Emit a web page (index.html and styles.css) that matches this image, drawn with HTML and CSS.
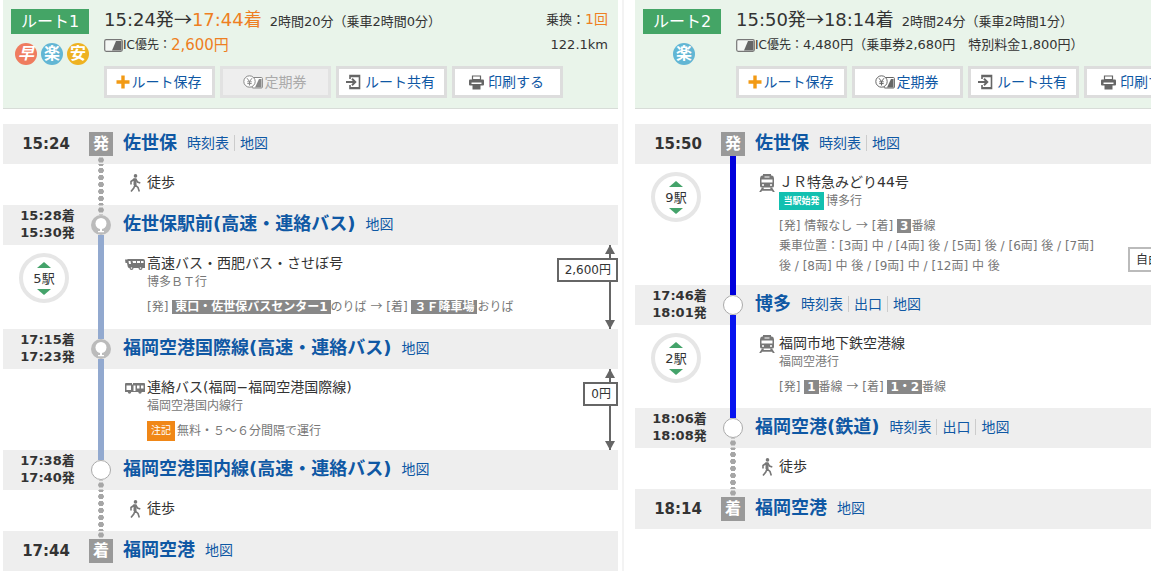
FILE: index.html
```html
<!DOCTYPE html>
<html lang="ja">
<head>
<meta charset="utf-8">
<meta name="viewport" content="width=device-width, initial-scale=1">
<title>佐世保 → 福岡空港 ルート検索結果</title>
<link rel="stylesheet" href="styles.css">
</head>
<body>
<svg class="defs" width="0" height="0" aria-hidden="true">
  <symbol id="i-ic" viewBox="0 0 19 13"><rect x=".7" y=".7" width="17.6" height="11.6" rx="1.5" fill="#f4f7f4" stroke="#777" stroke-width="1.2"/><path d="M8 11.5 12 2h5.500v9.500z" fill="#666"/></symbol>
  <symbol id="i-plus" viewBox="0 0 14 14"><path d="M5.300 .5h3.400v4.800h4.800v3.400H8.700v4.800H5.300V8.700H.5V5.300h4.800z" fill="#f29a14"/></symbol>
  <symbol id="i-pass" viewBox="0 0 20 15"><rect x="9" y="2.500" width="10.400" height="10.500" rx="1" fill="#fff" stroke="currentColor"/><path d="M12 12.500 16 4h2.500v8.500z" fill="currentColor"/><circle cx="6.500" cy="6.500" r="5.700" fill="#fff" stroke="currentColor"/><path d="M4 3.200 6.500 6.500 9 3.200M6.500 6.500v4M4.300 6.800h4.400M4.300 8.600h4.400" fill="none" stroke="currentColor"/></symbol>
  <symbol id="i-share" viewBox="0 0 15 16"><path d="M4 5V1.500h9.500v13H4V11" fill="none" stroke="#666" stroke-width="1.600"/><path d="M4 2.200h9.500M4 14h9.500" stroke="#666" stroke-width="2"/><path d="M0 8h8.500M6 4.800 9.300 8 6 11.200" fill="none" stroke="#666" stroke-width="1.900"/></symbol>
  <symbol id="i-print" viewBox="0 0 15 15"><path d="M3.500 1h8v3.500h-8z" fill="#fff" stroke="#666" stroke-width="1.200"/><rect x="0" y="4.500" width="15" height="6" rx="1" fill="#666"/><path d="M2.500 7.500h10V9h-10z" fill="#fff"/><path d="M3.500 9h8v5.500h-8z" fill="#666"/></symbol>
  <symbol id="i-walk" viewBox="0 0 12 18"><circle cx="6.500" cy="1.900" r="1.800" fill="#777"/><path d="M6 4.800v6L9 13.500l1.300 4M6 10.800 4.800 14 2 17.500M5.500 5 2 7.500V10.500M6.800 5.300 8.500 8l2.800 1" fill="none" stroke="#777" stroke-width="1.600"/><path d="M4.500 4.300h3v6.700h-3z" fill="#777"/></symbol>
  <symbol id="i-coach" viewBox="0 0 20 12"><path d="M0 1.500h2.500V1H18q2 0 2 2v7H4.500Q3 10 2.700 8.500L2 5H.5z" fill="#777"/><path d="M3.500 3h2l.5 3H4zM7.500 3H11v2H8zM12 3h3v2h-3zM16 3h2.500v2H16z" fill="#fff"/><circle cx="6.500" cy="10" r="2" fill="#777"/><circle cx="15.500" cy="10" r="2" fill="#777"/><circle cx="6.500" cy="10" r=".8" fill="#fff"/><circle cx="15.500" cy="10" r=".8" fill="#fff"/></symbol>
  <symbol id="i-shuttle" viewBox="0 0 20 12"><path d="M1 1h6v1.500h1V1h11q1 0 1 1v8H0V2q0-1 1-1z" fill="#777"/><path d="M1.500 3.500H6V8H1.500zM8.500 3.500h2V9h-2zM12 3.500h2.500V6.500H12zM16 3.500h2.500V6.500H16z" fill="#fff"/><circle cx="4.500" cy="10" r="1.700" fill="#777"/><circle cx="15" cy="10" r="1.700" fill="#777"/></symbol>
  <symbol id="i-train" viewBox="0 0 16 18"><path d="M4 0h8v1.500h1Q15 2 15 4.500V12q0 1.500-2 1.500H3Q1 13.500 1 12V4.500Q1 2 3 1.500h1z" fill="#777"/><path d="M2.500 5.500h11v3h-11zM5.500 2.500h5v1h-5z" fill="#fff"/><circle cx="4" cy="11" r="1" fill="#fff"/><circle cx="12" cy="11" r="1" fill="#fff"/><path d="M3 13.500h2L4.500 15h7L11 13.500h2l2.800 4.500h-2l-.8-1.300H3L2.200 18h-2z" fill="#777"/></symbol>
  <symbol id="i-stop" viewBox="0 0 20 20"><circle cx="10" cy="10" r="10" fill="#bbb"/><circle cx="10" cy="8.500" r="5.500" fill="#fff"/><path d="M9 13h2v3h2v1.300H7V16h2z" fill="#fff"/></symbol>
  <symbol id="i-up" viewBox="0 0 14 6"><path d="M7 0 14 6H0z" fill="#44a36a"/></symbol>
  <symbol id="i-down" viewBox="0 0 14 6"><path d="M0 0h14L7 6z" fill="#44a36a"/></symbol>
</svg>

<main class="page">
<article class="route">
  <header class="summary">
    <div class="labels">
      <h2 class="badge">ルート1</h2>
      <div class="merits"><span class="merit fast">早</span><span class="merit easy">楽</span><span class="merit cheap">安</span></div>
    </div>
    <div class="overview">
      <div class="line times"><div>15:24発<span class="cjk">→</span><span class="hot">17:44着</span><span class="duration">2時間20分（乗車2時間0分）</span></div><div class="meta">乗換：<span class="hot count">1回</span></div></div>
      <div class="line cost"><div class="price"><svg width="19" height="13"><use href="#i-ic"/></svg><span class="kind">IC優先：</span><span class="hot total">2,600円</span></div><div class="meta">122.1km</div></div>
      <div class="actions">
        <button type="button"><svg width="14" height="14"><use href="#i-plus"/></svg>ルート保存</button>
        <button type="button" disabled><svg class="pass" width="20" height="15"><use href="#i-pass"/></svg>定期券</button>
        <button type="button"><svg class="wide" width="15" height="16"><use href="#i-share"/></svg>ルート共有</button>
        <button type="button"><svg class="wide" width="15" height="15"><use href="#i-print"/></svg>印刷する</button>
      </div>
    </div>
  </header>
  <div class="timeline">
    <section class="row station">
      <div class="when single">15:24</div>
      <div class="rail"><i class="seg"></i><b class="mark">発</b><i class="seg walk"></i></div>
      <div class="place"><h3><a href="#">佐世保</a></h3><nav><a href="#">時刻表</a><a href="#">地図</a></nav></div>
    </section>
    <section class="row leg">
      <div class="when"></div><div class="rail"><i class="seg walk"></i></div>
      <div class="ride on-foot"><svg width="12" height="18"><use href="#i-walk"/></svg><div class="name">徒歩</div></div>
    </section>
    <section class="row station">
      <div class="when">15:28着<br>15:30発</div>
      <div class="rail"><i class="seg walk"></i><svg width="20" height="20"><use href="#i-stop"/></svg><i class="seg bus"></i></div>
      <div class="place"><h3><a href="#">佐世保駅前(高速・連絡バス)</a></h3><nav><a href="#">地図</a></nav></div>
    </section>
    <section class="row leg">
      <div class="when"><button type="button" class="stops"><svg width="14" height="6"><use href="#i-up"/></svg>5駅<svg width="14" height="6"><use href="#i-down"/></svg></button></div>
      <div class="rail"><i class="seg bus"></i></div>
      <div class="ride roomy"><svg class="bus-icon" width="20" height="12"><use href="#i-coach"/></svg>
        <div class="detail"><div class="name">高速バス・西肥バス・させぼ号</div><div class="bound">博多ＢＴ行</div>
        <div class="notes">[発] <b>東口・佐世保バスセンター1</b>のりば <span class="cjk">→</span> [着] <b>３Ｆ降車場</b>おりば</div></div>
      </div>
      <div class="fare"><div class="span"></div><div class="fare-box">2,600円</div></div>
    </section>
    <section class="row station">
      <div class="when">17:15着<br>17:23発</div>
      <div class="rail"><i class="seg bus"></i><svg width="20" height="20"><use href="#i-stop"/></svg><i class="seg bus"></i></div>
      <div class="place"><h3><a href="#">福岡空港国際線(高速・連絡バス)</a></h3><nav><a href="#">地図</a></nav></div>
    </section>
    <section class="row leg">
      <div class="when"></div>
      <div class="rail"><i class="seg bus"></i></div>
      <div class="ride tight"><svg class="bus-icon" width="20" height="12"><use href="#i-shuttle"/></svg>
        <div class="detail"><div class="name">連絡バス(福岡−福岡空港国際線)</div><div class="bound">福岡空港国内線行</div>
        <div class="notes remark"><span class="tag note">注記</span>無料・５～６分間隔で運行</div></div>
      </div>
      <div class="fare"><div class="span"></div><div class="fare-box">0円</div></div>
    </section>
    <section class="row station">
      <div class="when">17:38着<br>17:40発</div>
      <div class="rail"><i class="seg bus"></i><i class="dot"></i><i class="seg walk"></i></div>
      <div class="place"><h3><a href="#">福岡空港国内線(高速・連絡バス)</a></h3><nav><a href="#">地図</a></nav></div>
    </section>
    <section class="row leg">
      <div class="when"></div><div class="rail"><i class="seg walk"></i></div>
      <div class="ride on-foot"><svg width="12" height="18"><use href="#i-walk"/></svg><div class="name">徒歩</div></div>
    </section>
    <section class="row station">
      <div class="when single">17:44</div>
      <div class="rail"><i class="seg walk"></i><b class="mark">着</b><i class="seg"></i></div>
      <div class="place"><h3><a href="#">福岡空港</a></h3><nav><a href="#">地図</a></nav></div>
    </section>
  </div>
</article>

<div class="divider"></div>

<article class="route">
  <header class="summary">
    <div class="labels">
      <h2 class="badge">ルート2</h2>
      <div class="merits"><span class="merit easy">楽</span></div>
    </div>
    <div class="overview">
      <div class="line times"><div>15:50発<span class="cjk">→</span>18:14着<span class="duration">2時間24分（乗車2時間1分）</span></div></div>
      <div class="line cost"><div class="price"><svg width="19" height="13"><use href="#i-ic"/></svg><span class="kind">IC優先：</span>4,480円（乗車券2,680円　特別料金1,800円）</div></div>
      <div class="actions">
        <button type="button"><svg width="14" height="14"><use href="#i-plus"/></svg>ルート保存</button>
        <button type="button"><svg class="pass" width="20" height="15"><use href="#i-pass"/></svg>定期券</button>
        <button type="button"><svg class="wide" width="15" height="16"><use href="#i-share"/></svg>ルート共有</button>
        <button type="button"><svg class="wide" width="15" height="15"><use href="#i-print"/></svg>印刷する</button>
      </div>
    </div>
  </header>
  <div class="timeline">
    <section class="row station">
      <div class="when single">15:50</div>
      <div class="rail"><i class="seg"></i><b class="mark">発</b><i class="seg jr"></i></div>
      <div class="place"><h3><a href="#">佐世保</a></h3><nav><a href="#">時刻表</a><a href="#">地図</a></nav></div>
    </section>
    <section class="row leg">
      <div class="when"><button type="button" class="stops"><svg width="14" height="6"><use href="#i-up"/></svg>9駅<svg width="14" height="6"><use href="#i-down"/></svg></button></div>
      <div class="rail"><i class="seg jr"></i></div>
      <div class="ride tight"><svg width="16" height="18"><use href="#i-train"/></svg>
        <div class="detail"><div class="name">ＪＲ特急みどり44号</div><div class="bound"><span class="tag start">当駅始発</span>博多行</div>
        <div class="notes">[発] 情報なし <span class="cjk">→</span> [着] <b>3</b>番線</div>
        <div class="cars">乗車位置：[3両] 中 / [4両] 後 / [5両] 後 / [6両] 後 / [7両]<br>後 / [8両] 中 後 / [9両] 中 / [12両] 中 後</div></div>
      </div>
      <select class="seat" aria-label="座席"><option>自由席</option></select>
    </section>
    <section class="row station">
      <div class="when">17:46着<br>18:01発</div>
      <div class="rail"><i class="seg jr"></i><i class="dot"></i><i class="seg metro"></i></div>
      <div class="place"><h3><a href="#">博多</a></h3><nav><a href="#">時刻表</a><a href="#">出口</a><a href="#">地図</a></nav></div>
    </section>
    <section class="row leg">
      <div class="when"><button type="button" class="stops"><svg width="14" height="6"><use href="#i-up"/></svg>2駅<svg width="14" height="6"><use href="#i-down"/></svg></button></div>
      <div class="rail"><i class="seg metro"></i></div>
      <div class="ride"><svg width="16" height="18"><use href="#i-train"/></svg>
        <div class="detail"><div class="name">福岡市地下鉄空港線</div><div class="bound">福岡空港行</div>
        <div class="notes">[発] <b>1</b>番線 <span class="cjk">→</span> [着] <b>1・2</b>番線</div></div>
      </div>
    </section>
    <section class="row station">
      <div class="when">18:06着<br>18:08発</div>
      <div class="rail"><i class="seg metro"></i><i class="dot"></i><i class="seg walk"></i></div>
      <div class="place"><h3><a href="#">福岡空港(鉄道)</a></h3><nav><a href="#">時刻表</a><a href="#">出口</a><a href="#">地図</a></nav></div>
    </section>
    <section class="row leg">
      <div class="when"></div><div class="rail"><i class="seg walk"></i></div>
      <div class="ride on-foot"><svg width="12" height="18"><use href="#i-walk"/></svg><div class="name">徒歩</div></div>
    </section>
    <section class="row station">
      <div class="when single">18:14</div>
      <div class="rail"><i class="seg walk"></i><b class="mark">着</b><i class="seg"></i></div>
      <div class="place"><h3><a href="#">福岡空港</a></h3><nav><a href="#">地図</a></nav></div>
    </section>
  </div>
</article>
</main>
</body>
</html>
```
FILE: styles.css
```css
* { box-sizing: border-box; }

body {
  margin: 0;
  overflow-x: hidden;
  background: #fff;
  color: #333;
  font-family: "DejaVu Sans", "Noto Sans CJK JP", sans-serif;
  font-size: 14px;
}

a { color: #0f58a4; text-decoration: none; }
h2, h3 { margin: 0; }
svg { flex: none; display: block; }
button, select { font-family: inherit; }
.defs { position: absolute; }
.cjk { font-family: "Noto Sans CJK JP", sans-serif; line-height: 1; }
.hot { color: #ee7f22; }

.page { display: flex; padding-left: 3px; overflow: hidden; }
.route { flex: 1 0 615px; }
.divider { flex: none; width: 2px; margin: 0 11px 0 4px; background: #f3f3f3; }

/* Route summary */
.summary {
  display: flex;
  padding: 8px 10px 10px 8px;
  background: #e9f4ea;
  border-bottom: 1px solid #d8dcd8;
}
.labels { flex: none; width: 78px; margin-right: 15px; padding-top: 1px; }
.badge {
  background: #44a566;
  color: #fff;
  font-size: 16px;
  font-weight: normal;
  line-height: 25px;
  text-align: center;
}
.merits { display: flex; justify-content: center; gap: 4px; margin-top: 9px; padding-left: 4px; }
.merit {
  flex: none;
  width: 22px;
  height: 22px;
  border-radius: 50%;
  color: #fff;
  font-size: 16px;
  font-weight: bold;
  line-height: 21px;
  text-align: center;
}
.fast { background: #ef7c5f; font-style: italic; }
.easy { background: #62b6d4; }
.cheap { background: #eeb221; }

.overview { flex: 1; }
.line { display: flex; justify-content: space-between; }
.times { height: 24px; font-size: 18px; line-height: 24px; }
.duration { margin-left: 8px; font-size: 13px; line-height: 1; }
.meta { font-size: 13px; }
.count { font-size: 14px; line-height: 1; }
.cost { height: 22px; margin-top: 2px; font-size: 13px; line-height: 22px; }
.price { display: flex; align-items: center; }
.kind { font-size: 12px; }
.total { font-size: 15px; }

.actions { display: flex; gap: 5px; margin-top: 10px; }
.actions button {
  display: flex;
  flex: none;
  align-items: center;
  justify-content: center;
  width: 111px;
  height: 32px;
  padding: 0 2px 0 0;
  border: 3px solid #ddd;
  background: #fff;
  color: #0f58a4;
  font-size: 14px;
  line-height: 20px;
}
.actions svg { margin-right: 2px; }
.actions .wide { margin-right: 4px; }
.pass { color: #666; }
.actions button:disabled { border-color: #e2e2e2; background: #eee; color: #aaa; }
.actions button:disabled .pass { color: #888; }

/* Timeline */
.timeline { margin-top: 15px; }
.row { display: flex; }
.station { height: 40px; background: #eee; }
.when { flex: none; width: 86px; }
.station .when {
  padding-top: 2px;
  padding-left: 3px;
  font-size: 13px;
  font-weight: bold;
  line-height: 17px;
  text-align: center;
}
.station .single { padding: 0; font-size: 15px; line-height: 40px; }

.rail { display: flex; flex: none; flex-direction: column; align-items: center; width: 24px; }
.seg { flex: 1; width: 6px; }
.walk { background: radial-gradient(circle closest-side, #a6a6a6 85%, transparent 100%) center / 6px 7px repeat-y; }
.bus { background: #92a9cf; }
.jr { background: #0000dc; }
.metro { background: #0714ef; }
.mark {
  width: 24px;
  height: 24px;
  background: #999;
  color: #fff;
  font-size: 16px;
  line-height: 23px;
  text-align: center;
}
.dot { width: 20px; height: 20px; border: 1px solid #aaa; border-radius: 50%; background: #fff; }

.place { display: flex; align-items: center; padding: 0 0 2px 10px; }
.place h3 { font-size: 18px; line-height: 24px; white-space: nowrap; }
.place nav { display: flex; margin-left: 10px; line-height: 16px; }
.place nav a + a { margin-left: 5px; padding-left: 5px; border-left: 1px solid #ccc; }

.stops {
  display: flex;
  flex-direction: column;
  align-items: center;
  justify-content: center;
  gap: 2px;
  width: 50px;
  height: 50px;
  margin: 8px 0 0 16px;
  padding: 0;
  border: 4px solid #e6e6e6;
  border-radius: 50%;
  background: #fff;
  color: #333;
  font-size: 13px;
  line-height: 17px;
}

.ride { display: flex; flex: 1; padding: 8px 0 11px 12px; }
.ride > svg { width: 20px; margin: 2px 2px 0 0; }
.ride > .bus-icon { margin-top: 5px; }
.roomy { padding-bottom: 12px; }
.tight { padding-bottom: 9px; }
.on-foot { padding-bottom: 13px; }
.name { height: 20px; line-height: 20px; white-space: nowrap; }
.detail { color: #777; font-size: 12px; white-space: nowrap; }
.detail .name { color: #333; font-size: 14px; }
.bound { display: flex; align-items: center; height: 18px; line-height: 16px; }
.notes { height: 20px; margin-top: 6px; line-height: 20px; }
.notes b { display: inline-block; padding: 0 3px; background: #888; color: #fff; line-height: 14px; }
.cars { line-height: 20px; }
.remark { display: flex; align-items: center; }
.tag { margin-right: 2px; color: #fff; text-align: center; }
.note { width: 28px; background: #f08717; font-size: 10px; line-height: 20px; }
.start { width: 45px; background: #12c0b0; font-size: 9px; font-weight: bold; line-height: 18px; }

/* Fare bracket: the arrow and its label share one grid cell */
.fare { display: grid; color: #333; font-size: 12px; }
.span, .fare-box { grid-area: 1 / 1; }
.span {
  display: flex;
  flex-direction: column;
  justify-content: space-between;
  justify-self: end;
  width: 10px;
  margin-right: 3px;
  background: linear-gradient(#666, #666) center / 2px 100% no-repeat;
}
.span::before, .span::after { content: ""; height: 9px; background: #666; }
.span::before { clip-path: polygon(50% 0, 100% 100%, 0 100%); }
.span::after { clip-path: polygon(0 0, 100% 0, 50% 100%); }
.fare-box {
  align-self: start;
  justify-self: end;
  margin-top: 13px;
  padding: 0 5px 0 6px;
  border: 2px solid #666;
  background: #fff;
  line-height: 20px;
}
.seat {
  appearance: none;
  width: 122px;
  height: 25px;
  margin-top: 83px;
  padding: 0 6px;
  border: 2px solid #bbb;
  border-radius: 0;
  background: #fff;
  color: #333;
  font-size: 12px;
}
```
